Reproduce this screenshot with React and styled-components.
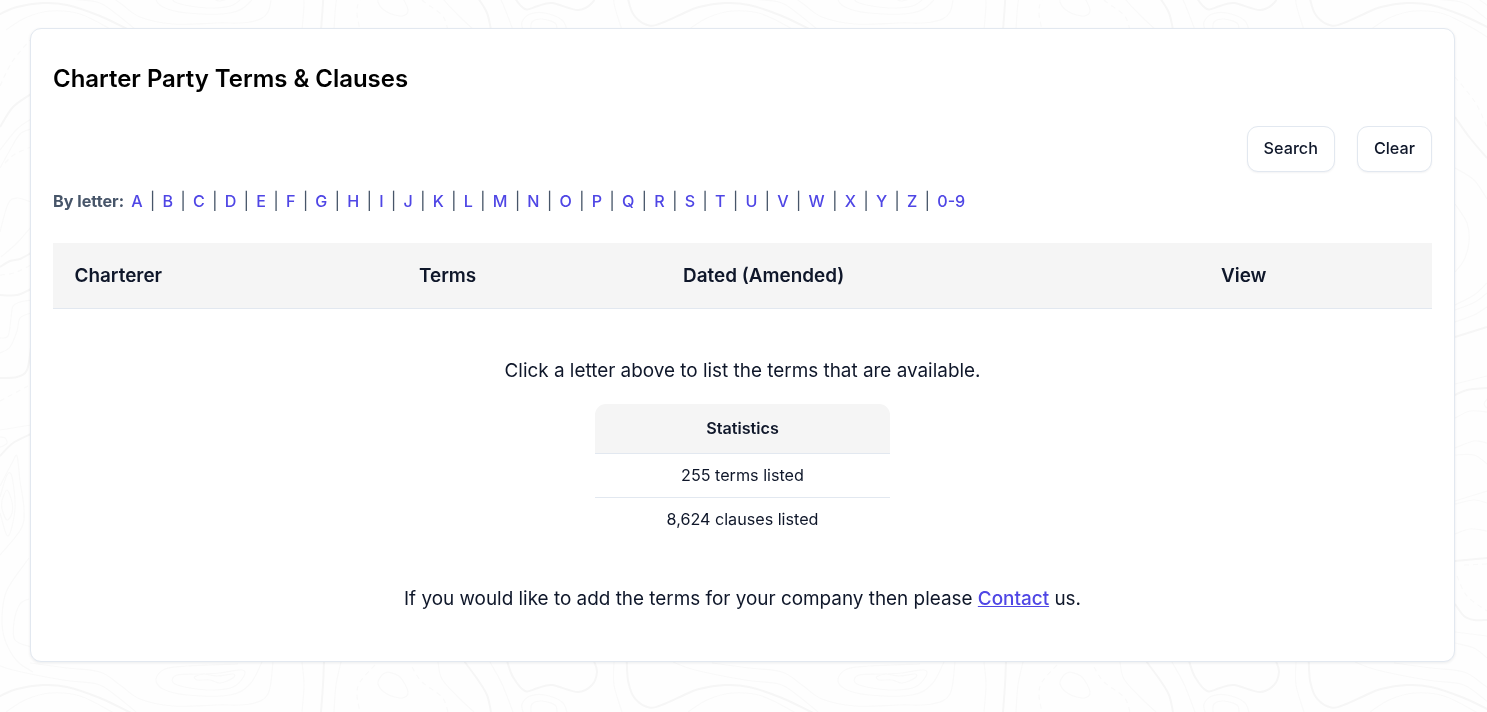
import React from 'react';
import styled, { createGlobalStyle } from 'styled-components';

const GlobalStyle = createGlobalStyle`
  * {
    box-sizing: border-box;
  }

  body {
    margin: 0;
    background: #fefefe;
    color: #0f172a;
    font-family: 'Inter', 'Liberation Sans', sans-serif;
    font-size: 18.9px;
    overflow: hidden;
  }
`;

const Page = styled.div`
  padding: 28px 32px 50px 30px;
`;

const Backdrop = styled.svg`
  position: fixed;
  top: 0;
  left: 0;
  width: 1487px;
  height: 712px;
  z-index: -1;
`;

const Contour = styled.path`
  fill: none;
  stroke: ${({ $bold }) => ($bold ? '#f6f6f6' : '#f9f9f9')};
  stroke-width: ${({ $bold }) => ($bold ? 2 : 1.2)};
  stroke-dasharray: ${({ $dashed }) => ($dashed ? '5 4' : 'none')};
`;

const Card = styled.main`
  display: flex;
  flex-direction: column;
  height: 634px;
  padding: 32px 22px 0;
  background: #fff;
  border: 1px solid #e2e8f0;
  border-radius: 11px;
  box-shadow: 0 1px 3px rgba(15, 23, 42, 0.08);
`;

const Title = styled.h1`
  margin: 0;
  font-size: 23.94px;
  font-weight: 600;
  line-height: 36px;
  color: #000;
`;

const Actions = styled.div`
  display: flex;
  justify-content: flex-end;
  gap: 22px;
  margin-top: 29px;
`;

const Button = styled.button`
  height: 46px;
  padding: 0 16px 2px;
  background: #fff;
  border: 1px solid #e2e8f0;
  border-radius: 11px;
  box-shadow: 0 1px 2px rgba(15, 23, 42, 0.05);
  color: #0f172a;
  font-family: inherit;
  font-size: 16.2px;
  font-weight: 500;
  cursor: pointer;
`;

const LetterBar = styled.nav`
  display: flex;
  align-items: baseline;
  height: 24px;
  margin-top: 17px;
  color: #475569;
  font-size: 16.1px;
  line-height: 24px;
  white-space: pre;
`;

const LetterLabel = styled.span`
  font-size: 16.2px;
  font-weight: 700;
`;

const LetterLink = styled.a`
  padding: 0 7.2px 0 7.08px;
  color: #4f46e5;
  font-weight: 500;
  cursor: pointer;
`;

const Divider = styled.span`
  font-size: 17px;
`;

const TableHead = styled.div`
  display: grid;
  grid-template-columns: 344.5px 264px 538px 1fr;
  align-items: center;
  height: 66px;
  margin-top: 30px;
  background: #f5f5f5;
  border-bottom: 1px solid #e2e8f0;
`;

const HeadCell = styled.div`
  padding-left: 21.5px;
  font-weight: 600;
  line-height: 26px;
`;

const Message = styled.p`
  margin: ${({ $top }) => $top}px 0 0;
  line-height: 28px;
  text-align: center;
`;

const ContactLink = styled.a`
  color: #4f46e5;
  font-weight: 500;
  text-decoration: underline;
  cursor: pointer;
`;

const Stats = styled.section`
  align-self: center;
  width: 295px;
  margin-top: 19px;
  font-size: 16.15px;
  text-align: center;
`;

const StatsTitle = styled.div`
  height: 50px;
  background: #f5f5f5;
  border-bottom: 1px solid #e2e8f0;
  border-radius: 11px 11px 0 0;
  font-weight: 600;
  line-height: 49px;
`;

const StatsRow = styled.div`
  height: 44px;
  line-height: 43px;

  & + & {
    border-top: 1px solid #e2e8f0;
    margin-top: -1px;
  }
`;

// Contour lines that repeat every TILE pixels, listed as x,y pairs
const TILE = 682;

const bandLines = [
  { bold: true, d: [626.7, 661, 628.3, 682, 635, 698.7, 650, 707.7, 665, 703.7, 682, 696, 699, 689, 725, 685, 749, 687, 782, 698, 811, 712, 835, 724] },
  { d: [688, 712, 707, 700, 732, 693, 762, 696, 794, 712, 815, 726] },
  { d: [673, 662, 695, 670, 745, 680, 779, 684, 797, 695, 818, 712] },
  { d: [30, 663, 67, 668, 100, 672, 120, 685, 140, 699, 173, 706, 217, 705, 250, 704, 268, 694, 273, 662] },
  { d: [238, 664, 187, 666, 165, 669, 156, 679, 163, 689, 187, 695, 230, 695, 250, 684, 262, 662] },
  { d: [172, 680, 177, 675, 200, 674, 220, 673, 242, 670, 244, 676, 233, 687, 213, 690, 190, 688, 175, 684, 172, 680] },
  { d: [194, 677, 203, 674, 217, 676, 233, 674, 233, 678, 220, 683, 210, 680, 197, 680, 194, 677] },
  { d: [302, 662, 304, 685, 302, 712] },
  { bold: true, d: [324, 661, 323, 685, 321, 712] },
  { d: [341, 662, 336, 685, 334, 712] },
  { dashed: true, d: [375, 665, 360, 682, 357, 695, 360, 712] },
  { d: [388, 672, 400, 677, 408, 692, 402, 698, 387, 694, 378, 684, 382, 675, 388, 672] },
  { dashed: true, d: [412, 667, 422, 682, 442, 697, 448, 712] },
  { d: [438, 662, 442, 679, 458, 697, 474, 712] },
  { bold: true, d: [464, 661, 478, 680, 487, 695, 491, 712] },
  { d: [490, 662, 502, 684, 513, 712] },
  { bold: true, d: [507, 661, 513, 677, 525, 691, 538, 688, 552, 685, 578, 692, 592, 685, 597, 672, 594, 661] },
  { d: [523, 712, 522, 704, 530, 696, 545, 695, 562, 702, 567, 712] },
  { d: [531, 712, 532, 704, 542, 701, 555, 705, 557, 712] },
  { d: [614, 662, 614, 685, 622, 712] },
];

const leftLines = [
  { dashed: true, d: [0, 86, 12, 62, 30, 40] },
  { bold: true, d: [0, 127, 13, 107, 31, 94] },
  { d: [0, 150, 17, 129, 31, 119] },
  { d: [0, 168, 10, 150, 20, 134, 31, 129] },
  { dashed: true, d: [5, 163, 15, 154, 31, 147] },
  { d: [0, 232, 8, 204, 17, 198, 31, 202] },
  { d: [1, 257, 17, 243, 31, 227] },
  { bold: true, d: [0, 267, 10, 261, 20, 259, 31, 253] },
  { dashed: true, d: [0, 275, 14, 273, 31, 265] },
  { bold: true, d: [0, 295, 17, 295, 31, 289] },
  { d: [31, 300, 20, 302, 13, 306, 11, 318, 8, 336, 0, 338] },
  { d: [31, 313, 20, 318, 17, 331, 10, 347, 0, 353] },
  { bold: true, d: [0, 378, 17, 377, 27, 370, 31, 347] },
  { dashed: true, d: [0, 401, 28, 386] },
  { d: [0, 430, 31, 425] },
  { bold: true, d: [0, 456, 13, 443, 31, 434] },
  { d: [0, 437, 5, 438, 7, 443, 3, 446, 0, 447] },
  { d: [0, 486, 12, 463, 17, 456, 20, 481, 24, 509, 21, 529, 0, 555] },
  { d: [0, 497, 7, 475, 12, 477, 15, 509, 8, 536, 0, 513] },
  { d: [2, 500, 7, 490, 12, 502, 12, 513, 7, 520, 2, 509, 2, 500] },
  { d: [29, 558, 7, 590, 2, 617, 5, 640, 17, 661, 33, 672] },
  { d: [29, 599, 20, 604, 14, 622, 15, 640, 31, 647] },
];

const rightLines = [
  { dashed: true, d: [1455, 77, 1475, 102, 1487, 127] },
  { bold: true, d: [1455, 117, 1470, 138, 1487, 158] },
  { d: [1455, 168, 1474, 180, 1487, 199] },
  { d: [1455, 204, 1467, 223, 1469, 242, 1464, 260, 1455, 272] },
  { d: [1455, 305, 1474, 295, 1487, 283] },
  { d: [1455, 310, 1475, 302, 1487, 293] },
  { d: [1455, 322, 1474, 315, 1487, 307] },
  { bold: true, d: [1455, 337, 1487, 327] },
  { d: [1455, 384, 1487, 376] },
  { bold: true, d: [1455, 395, 1467, 390, 1487, 388] },
  { d: [1488, 398, 1484, 404, 1488, 409] },
  { d: [1455, 418, 1470, 411, 1487, 412] },
  { d: [1455, 448, 1474, 441, 1487, 443] },
  { d: [1455, 455, 1474, 455, 1487, 464] },
  { d: [1455, 501, 1487, 491] },
  { d: [1455, 504, 1474, 500, 1487, 503] },
  { d: [1455, 534, 1470, 529, 1487, 531] },
  { bold: true, d: [1455, 561, 1487, 558] },
  { dashed: true, d: [1464, 565, 1487, 564] },
  { dashed: true, d: [1457, 576, 1467, 596, 1487, 611] },
  { bold: true, d: [1455, 604, 1464, 616, 1474, 620, 1487, 620] },
  { d: [1455, 632, 1487, 636] },
  { d: [1455, 643, 1474, 648, 1487, 658] },
];

// Smooth curve through every point of the list
const toCurve = (values) => {
  const points = [];
  for (let i = 0; i < values.length; i += 2) {
    points.push([values[i], values[i + 1]]);
  }
  let path = `M${points[0].join(' ')}`;
  for (let i = 0; i < points.length - 1; i++) {
    const before = points[i - 1] || points[i];
    const from = points[i];
    const to = points[i + 1];
    const after = points[i + 2] || to;
    path += `C${from[0] + (to[0] - before[0]) / 6} ${from[1] + (to[1] - before[1]) / 6} `;
    path += `${to[0] - (after[0] - from[0]) / 6} ${to[1] - (after[1] - from[1]) / 6} ${to[0]} ${to[1]}`;
  }
  return path;
};

const Contours = ({ lines }) =>
  lines.map((line, index) => (
    <Contour key={index} d={toCurve(line.d)} $bold={line.bold} $dashed={line.dashed} />
  ));

const letters = [...'ABCDEFGHIJKLMNOPQRSTUVWXYZ', '0-9'];
const columns = ['Charterer', 'Terms', 'Dated (Amended)', 'View'];
const stats = ['255 terms listed', '8,624 clauses listed'];

const App = () => {
  return (
    <Page>
      <GlobalStyle />
      <Backdrop viewBox="0 0 1487 712" aria-hidden="true">
        {[-TILE, 0].map((y) =>
          [-TILE, 0, TILE, TILE * 2].map((x) => (
            <g key={`${x}/${y}`} transform={`translate(${x} ${y})`}>
              <Contours lines={bandLines} />
            </g>
          ))
        )}
        <Contours lines={leftLines} />
        <Contours lines={rightLines} />
      </Backdrop>

      <Card>
        <Title>Charter Party Terms &amp; Clauses</Title>

        <Actions>
          <Button>Search</Button>
          <Button>Clear</Button>
        </Actions>

        <LetterBar>
          <LetterLabel>By letter:</LetterLabel>
          {letters.map((letter, index) => (
            <React.Fragment key={letter}>
              {index > 0 && <Divider>|</Divider>}
              <LetterLink>{letter}</LetterLink>
            </React.Fragment>
          ))}
        </LetterBar>

        <TableHead>
          {columns.map((column) => (
            <HeadCell key={column}>{column}</HeadCell>
          ))}
        </TableHead>

        <Message $top={48}>Click a letter above to list the terms that are available.</Message>

        <Stats>
          <StatsTitle>Statistics</StatsTitle>
          {stats.map((stat) => (
            <StatsRow key={stat}>{stat}</StatsRow>
          ))}
        </Stats>

        <Message $top={44}>
          If you would like to add the terms for your company then please{' '}
          <ContactLink>Contact</ContactLink> us.
        </Message>
      </Card>
    </Page>
  );
};

export default App;
